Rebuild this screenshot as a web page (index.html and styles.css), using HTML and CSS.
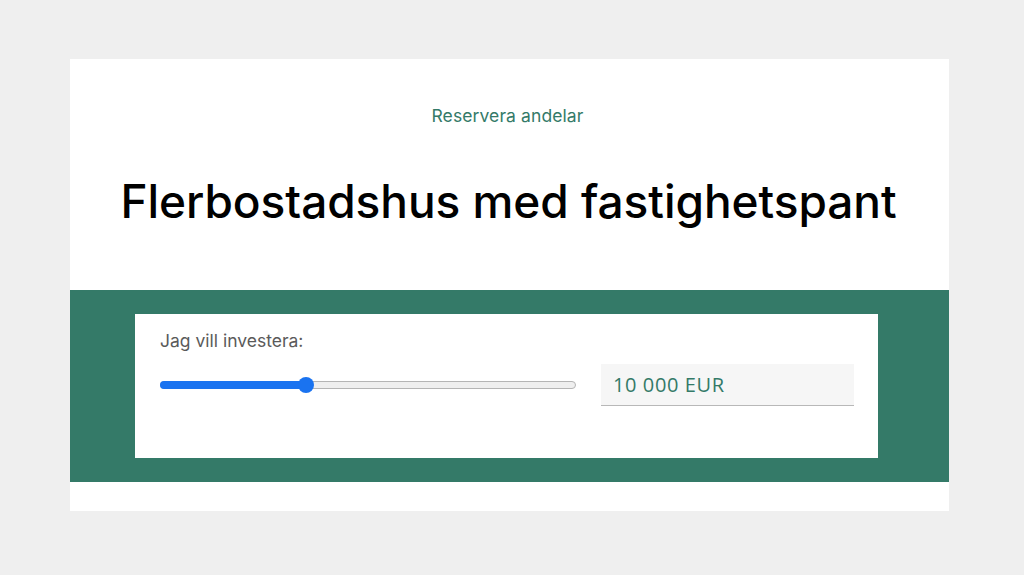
FILE: index.html
```html
<!DOCTYPE html>
<html lang="sv">
<head>
<meta charset="utf-8">
<title>Reservera andelar</title>
<link rel="stylesheet" href="styles.css">
</head>
<body>
<main class="card">
  <header class="head">
    <p class="eyebrow">Reservera andelar</p>
    <h1 class="title">Flerbostadshus med fastighetspant</h1>
  </header>
  <section class="band">
    <div class="panel">
      <label class="label" for="amount">Jag vill investera:</label>
      <div class="row">
        <div class="slider">
          <div class="track"><div class="fill" style="width: 35%"></div></div>
          <div class="thumb" style="left: 35%"></div>
        </div>
        <div class="field"><span class="value" id="amount">10 000 EUR</span></div>
      </div>
    </div>
  </section>
</main>
</body>
</html>
```

FILE: styles.css
```css
html, body {
  margin: 0;
  padding: 0;
}
body {
  background: #efefef;
  font-family: Inter, "Noto Sans", sans-serif;
  padding-top: 59px;
  height: 575px;
  box-sizing: border-box;
}
.card {
  width: 879px;
  margin-left: 70px;
  background: #fff;
  padding-bottom: 29px;
}
.head {
  height: 231px;
  box-sizing: border-box;
  padding-top: 47px;
  text-align: center;
}
.eyebrow {
  margin: 0 0 0 -4px;
  font-size: 17.5px;
  line-height: 20px;
  letter-spacing: 0.1px;
  color: #347a68;
}
.title {
  margin: 48px 0 0 -2px;
  font-size: 46px;
  line-height: 54px;
  font-weight: 500;
  letter-spacing: -0.05px;
  color: #000;
}
.band {
  background: #347a68;
  height: 192px;
  padding: 24px 71px 0 65px;
  box-sizing: border-box;
}
.panel {
  background: #fff;
  height: 144px;
  box-sizing: border-box;
  padding: 16px 24px 0 25px;
}
.label {
  display: block;
  font-size: 17.5px;
  line-height: 22px;
  color: #5a5a5a;
}
.row {
  display: flex;
  align-items: center;
  gap: 25px;
  margin-top: 12px;
}
.slider {
  position: relative;
  width: 416px;
  height: 16px;
}
.track {
  position: absolute;
  left: 0;
  right: 0;
  top: 4px;
  height: 8px;
  box-sizing: border-box;
  border: 1px solid #b5b5b5;
  background: #efefef;
  border-radius: 4px;
}
.fill {
  position: absolute;
  left: -1px;
  top: -1px;
  bottom: -1px;
  background: #1a73f0;
  border-radius: 4px;
}
.thumb {
  position: absolute;
  top: 0;
  width: 16px;
  height: 16px;
  margin-left: -8px;
  border-radius: 50%;
  background: #1a73f0;
}
.field {
  width: 253px;
  height: 42px;
  background: #f6f6f6;
  border-bottom: 1px solid #b8b8b8;
  box-sizing: border-box;
  display: flex;
  align-items: center;
  padding-left: 12px;
}
.value {
  font-family: "Open Sans", sans-serif;
  font-size: 20px;
  letter-spacing: 0.6px;
  color: #347a68;
}
```
